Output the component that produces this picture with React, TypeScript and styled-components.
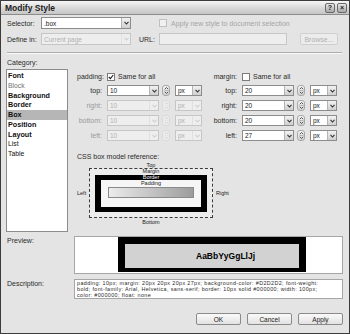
import React from 'react';
import styled, { createGlobalStyle } from 'styled-components';

const GlobalStyle = createGlobalStyle`
  html, body {
    margin: 0;
    padding: 0;
    background: #ffffff;
  }
  body {
    font-family: "Liberation Sans", Arial, sans-serif;
  }
`;

const Dialog = styled.div`
  width: 350px;
  height: 334px;
  box-sizing: border-box;
  border: 1px solid #3c3c3c;
  background: #e4e4e4;
  display: flex;
  flex-direction: column;
  overflow: hidden;
  font-size: 7px;
  color: #2a2a2a;
`;

const TitleBar = styled.div`
  height: 14px;
  box-sizing: border-box;
  border-bottom: 1px solid #8c8c8c;
  background: linear-gradient(#f7f7f7, #d6d6d6 60%, #c6c6c6);
  display: flex;
  align-items: center;
  justify-content: space-between;
  padding: 0 2px 0 4px;
`;

const Title = styled.span`
  font-weight: bold;
  font-size: 8.5px;
  color: #1c1c1c;
`;

const TitleButtons = styled.div`
  display: flex;
  gap: 2px;
`;

const TitleButton = styled.div`
  width: 8px;
  height: 8px;
  border: 1px solid #6a6a6a;
  border-radius: 2px;
  background: linear-gradient(#e8e8e8, #a8a8a8);
  display: flex;
  align-items: center;
  justify-content: center;
  font-size: 7px;
  font-weight: bold;
  line-height: 1;
  color: #222;
`;

const Body = styled.div`
  flex: 1;
  display: flex;
  flex-direction: column;
  padding: 0 6px 0 5px;
`;

const FormRow = styled.div<{ $top: number }>`
  display: flex;
  align-items: center;
  height: 12px;
  margin-top: ${(p) => p.$top}px;
`;

const Label = styled.span<{ $width?: number; $muted?: boolean }>`
  width: ${(p) => (p.$width ? `${p.$width}px` : 'auto')};
  padding-left: 1px;
  flex-shrink: 0;
  color: ${(p) => (p.$muted ? '#a4a4a4' : '#2a2a2a')};
  white-space: nowrap;
`;

const ComboBox = styled.div<{ $width: number; $height?: number; $disabled?: boolean }>`
  width: ${(p) => p.$width}px;
  height: ${(p) => p.$height ?? 12}px;
  box-sizing: border-box;
  display: flex;
  flex-shrink: 0;
  border: 1px solid ${(p) => (p.$disabled ? '#c6c6c6' : '#8c8c8c')};
  background: ${(p) => (p.$disabled ? '#eeeeee' : '#ffffff')};
`;

const ComboText = styled.span<{ $disabled?: boolean }>`
  flex: 1;
  padding-left: 2px;
  display: flex;
  align-items: center;
  font-size: 6.5px;
  color: ${(p) => (p.$disabled ? '#b0b0b0' : '#222')};
  overflow: hidden;
  white-space: nowrap;
`;

const ComboArrow = styled.span<{ $disabled?: boolean }>`
  width: 8px;
  display: flex;
  align-items: center;
  justify-content: center;
  background: ${(p) => (p.$disabled ? '#eeeeee' : 'linear-gradient(#f2f2f2, #cfcfcf)')};
  border-left: 1px solid ${(p) => (p.$disabled ? '#e0e0e0' : '#b4b4b4')};
`;

const TextBox = styled.div<{ $width: number }>`
  width: ${(p) => p.$width}px;
  height: 12px;
  box-sizing: border-box;
  border: 1px solid #c6c6c6;
  background: #eeeeee;
  flex-shrink: 0;
`;

const CheckBox = styled.span<{ $disabled?: boolean }>`
  width: 8px;
  height: 8px;
  box-sizing: border-box;
  border: 1px solid ${(p) => (p.$disabled ? '#c0c0c0' : '#7c7c7c')};
  background: ${(p) => (p.$disabled ? '#f0f0f0' : '#ffffff')};
  display: inline-flex;
  align-items: center;
  justify-content: center;
  flex-shrink: 0;
  margin-right: 3px;
`;

const BrowseButton = styled.div`
  width: 38px;
  height: 12px;
  box-sizing: border-box;
  margin-left: 13px;
  border: 1px solid #cfcfcf;
  border-radius: 2px;
  background: #ececec;
  color: #b0b0b0;
  display: flex;
  align-items: center;
  justify-content: center;
`;

const Separator = styled.div`
  margin: 7px 1px 0 1px;
  border-top: 1px solid #adadad;
  border-bottom: 1px solid #fafafa;
`;

const SectionLabel = styled.div`
  margin-top: 5px;
  line-height: 8px;
  padding-left: 1px;
`;

const Main = styled.div`
  display: flex;
  margin-top: 2px;
`;

const CategoryList = styled.div`
  width: 62px;
  height: 163px;
  box-sizing: border-box;
  border: 1px solid #8c8c8c;
  background: #ffffff;
  padding-top: 1px;
  flex-shrink: 0;
`;

const CategoryItem = styled.div<{ $bold?: boolean; $selected?: boolean; $muted?: boolean }>`
  height: 9.75px;
  line-height: 9.75px;
  padding-left: 1px;
  font-size: ${(p) => (p.$bold ? '7.2px' : '6.8px')};
  font-weight: ${(p) => (p.$bold ? 'bold' : 'normal')};
  color: ${(p) => (p.$muted ? '#707070' : '#111')};
  background: ${(p) => (p.$selected ? '#b6b6b6' : 'transparent')};
`;

const Panel = styled.div`
  flex: 1;
  margin-left: 5px;
  padding: 3px 0 0 4px;
  display: flex;
  flex-direction: column;
`;

const Groups = styled.div`
  display: flex;
  gap: 10px;
`;

const Group = styled.div`
  display: flex;
  flex-direction: column;
  gap: 4px;
`;

const GroupHeader = styled.div`
  height: 9px;
  display: flex;
  align-items: center;
`;

const SideLabel = styled.span<{ $muted?: boolean }>`
  width: 25px;
  text-align: right;
  flex-shrink: 0;
  margin-right: 5px;
  color: ${(p) => (p.$muted ? '#9a9a9a' : '#2a2a2a')};
  white-space: nowrap;
`;

const SpinRow = styled.div`
  height: 11px;
  display: flex;
  align-items: center;
`;

const Spinner = styled.span<{ $disabled?: boolean }>`
  width: 8px;
  height: 11px;
  box-sizing: border-box;
  margin: 0 5px 0 3px;
  border: 1px solid ${(p) => (p.$disabled ? '#dadada' : '#a8a8a8')};
  border-radius: 3px;
  background: ${(p) => (p.$disabled ? '#ececec' : 'linear-gradient(#f4f4f4, #d2d2d2)')};
  display: flex;
  align-items: center;
  justify-content: center;
  flex-shrink: 0;
`;

const DiagramTitle = styled.div`
  margin-top: 12px;
  line-height: 8px;
`;

const Diagram = styled.div`
  display: grid;
  grid-template-columns: 12px 124px auto;
  grid-template-rows: 7px 50px 8px;
  font-size: 5.5px;
  color: #222;
`;

const EdgeLabel = styled.span<{ $col: number; $row: number; $align?: string }>`
  grid-column: ${(p) => p.$col};
  grid-row: ${(p) => p.$row};
  align-self: center;
  justify-self: ${(p) => p.$align ?? 'center'};
  line-height: 6px;
  padding-left: ${(p) => (p.$col === 3 ? 3 : 0)}px;
`;

const MarginBox = styled.div`
  grid-column: 2;
  grid-row: 2;
  box-sizing: border-box;
  border: 1px dashed #3a3a3a;
  background: #ececec;
  padding: 0 5px 5px 5px;
  display: flex;
  flex-direction: column;
`;

const BoxLabel = styled.div<{ $light?: boolean }>`
  text-align: center;
  line-height: 5.5px;
  height: 5.5px;
  font-size: 5.5px;
  color: ${(p) => (p.$light ? '#ffffff' : '#222')};
`;

const BorderBox = styled.div`
  flex: 1;
  background: #000;
  padding: 0 6px 5px 6px;
  display: flex;
  flex-direction: column;
`;

const PaddingBox = styled.div`
  flex: 1;
  background: #f6f6f6;
  padding: 0.5px 7px 0 7px;
`;

const ContentBar = styled.div`
  margin-top: 1px;
  height: 11px;
  box-sizing: border-box;
  border: 1px solid #8a8a8a;
  background: linear-gradient(to right, #ececec, #9c9c9c);
`;

const FieldRow = styled.div<{ $top: number }>`
  display: flex;
  margin-top: ${(p) => p.$top}px;
`;

const FieldLabel = styled.div`
  width: 67px;
  flex-shrink: 0;
  padding: 1px 0 0 1px;
  line-height: 8px;
`;

const PreviewBox = styled.div`
  flex: 1;
  height: 38px;
  box-sizing: border-box;
  border: 1px solid #a6a6a6;
  background: #ffffff;
  overflow: hidden;
`;

const PreviewSample = styled.div`
  margin-left: 43px;
  width: 188px;
  height: 35px;
  box-sizing: border-box;
  border: 7px solid #000;
  border-bottom-width: 4px;
  background: #d2d2d2;
  padding-left: 71px;
  display: flex;
  align-items: center;
  font-size: 8.5px;
  font-weight: bold;
  color: #000;
`;

const DescriptionBox = styled.div`
  flex: 1;
  height: 20px;
  box-sizing: border-box;
  border: 1px solid #a6a6a6;
  background: #ffffff;
  padding: 0 0 0 2px;
  font-size: 5.4px;
  line-height: 6px;
  letter-spacing: 0.38px;
  color: #2a2a2a;
  overflow: hidden;
`;

const DescLine = styled.div`
  white-space: nowrap;
  height: 6px;
`;

const ButtonRow = styled.div`
  display: flex;
  justify-content: flex-end;
  gap: 6px;
  margin-top: 14px;
`;

const DialogButton = styled.div`
  width: 45px;
  height: 12px;
  box-sizing: border-box;
  border: 1px solid #8a8a8a;
  border-radius: 2px;
  background: linear-gradient(#fbfbfb, #e2e2e2);
  display: flex;
  align-items: center;
  justify-content: center;
  font-size: 6.5px;
  color: #222;
`;

function Chevron({ disabled }: { disabled?: boolean }) {
  return (
    <svg width="5" height="4" viewBox="0 0 5 4">
      <path d="M0.5 0.8 L2.5 3 L4.5 0.8" fill="none" stroke={disabled ? '#cfcfcf' : '#333'} strokeWidth="1.1" />
    </svg>
  );
}

function Check() {
  return (
    <svg width="6" height="6" viewBox="0 0 6 6">
      <path d="M0.8 3 L2.4 4.6 L5.2 1" fill="none" stroke="#222" strokeWidth="1.1" />
    </svg>
  );
}

function SpinArrows({ disabled }: { disabled?: boolean }) {
  const c = disabled ? '#d0d0d0' : '#444';
  return (
    <svg width="5" height="9" viewBox="0 0 5 9">
      <path d="M0.8 3.2 L2.5 1.5 L4.2 3.2" fill="none" stroke={c} strokeWidth="0.9" />
      <path d="M0.5 4.5 H4.5" stroke={disabled ? '#e0e0e0' : '#999'} strokeWidth="0.6" />
      <path d="M0.8 5.8 L2.5 7.5 L4.2 5.8" fill="none" stroke={c} strokeWidth="0.9" />
    </svg>
  );
}

function Combo({
  width,
  height,
  value,
  disabled,
}: {
  width: number;
  height?: number;
  value: string;
  disabled?: boolean;
}) {
  return (
    <ComboBox $width={width} $height={height} $disabled={disabled}>
      <ComboText $disabled={disabled}>{value}</ComboText>
      <ComboArrow $disabled={disabled}>
        <Chevron disabled={disabled} />
      </ComboArrow>
    </ComboBox>
  );
}

interface SideRow {
  side: string;
  value: string;
  disabled: boolean;
}

function SpinGroup({ name, sameForAll, rows }: { name: string; sameForAll: boolean; rows: SideRow[] }) {
  return (
    <Group>
      <GroupHeader>
        <SideLabel>{name}:</SideLabel>
        <CheckBox>{sameForAll && <Check />}</CheckBox>
        <span>Same for all</span>
      </GroupHeader>
      {rows.map((r) => (
        <SpinRow key={r.side}>
          <SideLabel $muted={r.disabled}>{r.side}:</SideLabel>
          <Combo width={52} height={11} value={r.value} disabled={r.disabled} />
          <Spinner $disabled={r.disabled}>
            <SpinArrows disabled={r.disabled} />
          </Spinner>
          <Combo width={27} height={11} value="px" disabled={r.disabled} />
        </SpinRow>
      ))}
    </Group>
  );
}

const categories = [
  { name: 'Font', bold: true },
  { name: 'Block', muted: true },
  { name: 'Background', bold: true },
  { name: 'Border', bold: true },
  { name: 'Box', bold: true, selected: true },
  { name: 'Position', bold: true },
  { name: 'Layout', bold: true },
  { name: 'List' },
  { name: 'Table' },
];

const paddingRows: SideRow[] = [
  { side: 'top', value: '10', disabled: false },
  { side: 'right', value: '10', disabled: true },
  { side: 'bottom', value: '10', disabled: true },
  { side: 'left', value: '10', disabled: true },
];

const marginRows: SideRow[] = [
  { side: 'top', value: '20', disabled: false },
  { side: 'right', value: '20', disabled: false },
  { side: 'bottom', value: '20', disabled: false },
  { side: 'left', value: '27', disabled: false },
];

export default function App() {
  return (
    <>
      <GlobalStyle />
      <Dialog>
        <TitleBar>
          <Title>Modify Style</Title>
          <TitleButtons>
            <TitleButton>?</TitleButton>
            <TitleButton>×</TitleButton>
          </TitleButtons>
        </TitleBar>
        <Body>
          <FormRow $top={2}>
            <Label $width={34}>Selector:</Label>
            <Combo width={90} value=".box" />
            <span style={{ width: 28 }} />
            <CheckBox $disabled />
            <Label $muted>Apply new style to document selection</Label>
          </FormRow>
          <FormRow $top={4}>
            <Label $width={34}>Define in:</Label>
            <Combo width={90} value="Current page" disabled />
            <span style={{ width: 7 }} />
            <Label $width={20}>URL:</Label>
            <TextBox $width={128} />
            <BrowseButton>Browse...</BrowseButton>
          </FormRow>
          <Separator />
          <SectionLabel>Category:</SectionLabel>
          <Main>
            <CategoryList>
              {categories.map((c) => (
                <CategoryItem key={c.name} $bold={c.bold} $selected={c.selected} $muted={c.muted}>
                  {c.name}
                </CategoryItem>
              ))}
            </CategoryList>
            <Panel>
              <Groups>
                <SpinGroup name="padding" sameForAll rows={paddingRows} />
                <SpinGroup name="margin" sameForAll={false} rows={marginRows} />
              </Groups>
              <DiagramTitle>CSS box model reference:</DiagramTitle>
              <Diagram>
                <EdgeLabel $col={2} $row={1}>Top</EdgeLabel>
                <EdgeLabel $col={1} $row={2} $align="start">Left</EdgeLabel>
                <MarginBox>
                  <BoxLabel>Margin</BoxLabel>
                  <BorderBox>
                    <BoxLabel $light>Border</BoxLabel>
                    <PaddingBox>
                      <BoxLabel>Padding</BoxLabel>
                      <ContentBar />
                    </PaddingBox>
                  </BorderBox>
                </MarginBox>
                <EdgeLabel $col={3} $row={2} $align="start">Right</EdgeLabel>
                <EdgeLabel $col={2} $row={3}>Bottom</EdgeLabel>
              </Diagram>
            </Panel>
          </Main>
          <FieldRow $top={4}>
            <FieldLabel>Preview:</FieldLabel>
            <PreviewBox>
              <PreviewSample>AaBbYyGgLlJj</PreviewSample>
            </PreviewBox>
          </FieldRow>
          <FieldRow $top={5}>
            <FieldLabel>Description:</FieldLabel>
            <DescriptionBox>
              <DescLine>padding: 10px; margin: 20px 20px 20px 27px; background-color: #D2D2D2; font-weight:</DescLine>
              <DescLine>bold; font-family: Arial, Helvetica, sans-serif; border: 10px solid #000000; width: 100px;</DescLine>
              <DescLine>color: #000000; float: none</DescLine>
            </DescriptionBox>
          </FieldRow>
          <ButtonRow>
            <DialogButton>OK</DialogButton>
            <DialogButton>Cancel</DialogButton>
            <DialogButton>Apply</DialogButton>
          </ButtonRow>
        </Body>
      </Dialog>
    </>
  );
}
